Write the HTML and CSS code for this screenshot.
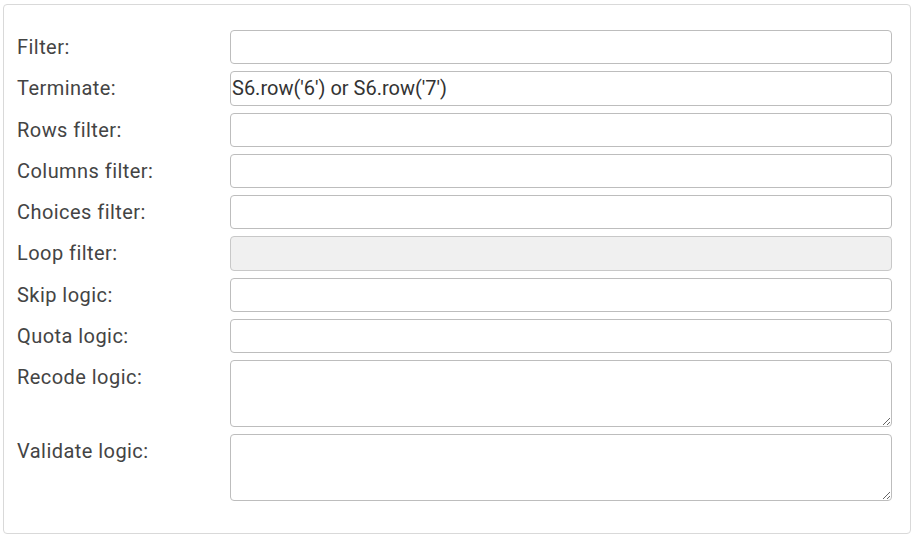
FILE: index.html
```html
<!DOCTYPE html>
<html lang="en">
<head>
<meta charset="utf-8">
<title>Logic</title>
<link rel="stylesheet" href="styles.css">
</head>
<body>
<div class="panel">
  <form class="form">
    <label class="lbl">Filter:</label>
    <input class="field" type="text">
    <label class="lbl">Terminate:</label>
    <input class="field" type="text" value="S6.row('6') or S6.row('7')">
    <label class="lbl">Rows filter:</label>
    <input class="field" type="text">
    <label class="lbl">Columns filter:</label>
    <input class="field" type="text">
    <label class="lbl">Choices filter:</label>
    <input class="field" type="text">
    <label class="lbl">Loop filter:</label>
    <input class="field" type="text" disabled>
    <label class="lbl">Skip logic:</label>
    <input class="field" type="text">
    <label class="lbl">Quota logic:</label>
    <input class="field" type="text">
    <label class="lbl">Recode logic:</label>
    <textarea class="field area"></textarea>
    <label class="lbl">Validate logic:</label>
    <textarea class="field area"></textarea>
  </form>
</div>
</body>
</html>
```
FILE: styles.css
```css
html, body {
  margin: 0;
  padding: 0;
  background: #fff;
}
body {
  font-family: Roboto, "Liberation Sans", sans-serif;
  font-size: 20px;
  color: #444;
}
.panel {
  margin: 4px 2px 4px 3px;
  height: 530px;
  box-sizing: border-box;
  border: 1px solid #d9d9d9;
  border-radius: 4px;
  padding: 25px 18px 32px 13px;
}
.form {
  display: grid;
  grid-template-columns: 213px 1fr;
  grid-template-rows: repeat(8, 34.25px) 67px 67px;
  row-gap: 7px;
}
.lbl {
  line-height: 34px;
  align-self: start;
  white-space: nowrap;
  letter-spacing: 0.45px;
}
.field {
  box-sizing: border-box;
  height: 34.25px;
  margin: 0;
  padding: 0 1px;
  border: 1px solid #bdbdbd;
  border-radius: 4px;
  background: #fff;
  font-family: inherit;
  font-size: 20px;
  color: #333;
  outline: none;
}
.field:disabled {
  background: #f0f0f0;
  border-color: #c8c8c8;
}
.area {
  height: 67px;
  resize: vertical;
}
```
